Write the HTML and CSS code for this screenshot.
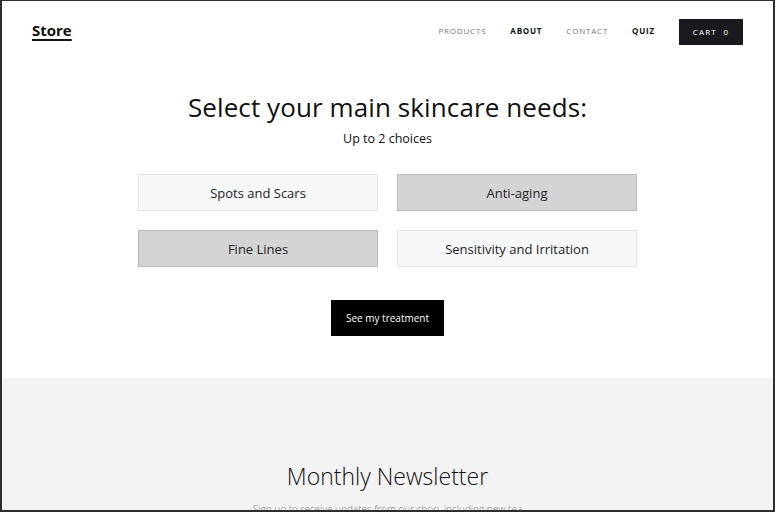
FILE: index.html
```html
<!DOCTYPE html>
<html>
    <head>
        <meta charset="utf-8" />
        <meta name="viewport" content="width=device-width" />
        <title>Store - Skincare quiz</title>
        <link rel="stylesheet" href="styles.css">
    </head>
    <body>
        <div class="page">
            <header class="site-header">
                <a class="logo" href="#">Store</a>
                <nav class="nav">
                    <a class="nav-link" href="#">Products</a>
                    <a class="nav-link active" href="#">About</a>
                    <a class="nav-link" href="#">Contact</a>
                    <a class="nav-link active" href="#">Quiz</a>
                    <a class="cart" href="#">Cart&nbsp; 0</a>
                </nav>
            </header>

            <section class="quiz">
                <h1 class="quiz-title">Select your main skincare needs:</h1>
                <p class="quiz-sub">Up to 2 choices</p>
                <div class="choices">
                    <button class="choice">Spots and Scars</button>
                    <button class="choice selected">Anti-aging</button>
                    <button class="choice selected">Fine Lines</button>
                    <button class="choice">Sensitivity and Irritation</button>
                </div>
                <button class="submit">See my treatment</button>
            </section>

            <section class="newsletter">
                <h2 class="newsletter-title">Monthly Newsletter</h2>
                <p class="newsletter-text">Sign up to receive updates from our shop, including new tea selections and upcoming events.</p>
            </section>
        </div>
    </body>
</html>
```

FILE: styles.css
```css
html, body { margin: 0; padding: 0; width: 100%; height: 100%; overflow: hidden }
body {
    background: #fff;
    font-family: 'Open Sans', sans-serif;
    color: #111;
}

.page {
    box-sizing: border-box;
    height: 100%;
    border: 2px solid #2e2e2e;
    border-top-width: 1px;
    overflow: hidden;
}

/* header */
.site-header {
    display: flex;
    align-items: center;
    justify-content: space-between;
    padding: 18px 30px 0 30px;
}
.logo {
    font-size: 15px;
    font-weight: 700;
    line-height: 18px;
    margin-top: -4px;
    color: #111;
    text-decoration: underline;
    text-decoration-thickness: 2px;
    text-underline-offset: 3px;
}
.nav {
    display: flex;
    align-items: center;
}
.nav-link {
    font-size: 8px;
    line-height: 10px;
    margin-top: -2px;
    letter-spacing: 0.8px;
    text-transform: uppercase;
    text-decoration: none;
    color: #777;
    margin-right: 24px;
}
.nav-link.active {
    color: #111;
    font-weight: 700;
}
.cart {
    display: block;
    width: 64px;
    height: 26px;
    line-height: 26px;
    text-align: center;
    background: #1a1a1e;
    color: #fff;
    font-size: 8px;
    letter-spacing: 1.2px;
    text-transform: uppercase;
    text-decoration: none;
}

/* quiz */
.quiz {
    display: flex;
    flex-direction: column;
    align-items: center;
    padding-top: 47px;
    height: 333px;
    box-sizing: border-box;
}
.quiz-title {
    margin: 0;
    font-size: 26px;
    font-weight: 400;
    letter-spacing: 0.1px;
    line-height: 30px;
}
.quiz-sub {
    margin: 9px 0 0 0;
    font-size: 12.5px;
    line-height: 16px;
}
.choices {
    display: grid;
    grid-template-columns: 240px 240px;
    gap: 19px;
    margin-top: 27px;
}
.choice {
    height: 37px;
    font-family: inherit;
    font-size: 13px;
    color: #222;
    background: #f7f8fa;
    border: 1px solid #e3e4e6;
    cursor: pointer;
}
.choice.selected {
    background: #d3d4d6;
    border-color: #b9babc;
}
.submit {
    margin-top: 33px;
    width: 113px;
    height: 36px;
    background: #000;
    color: #fff;
    border: 0;
    font-family: inherit;
    font-size: 10px;
    cursor: pointer;
}

/* newsletter */
.newsletter {
    background: #f3f3f3;
    height: 200px;
    text-align: center;
    padding-top: 84px;
    box-sizing: border-box;
}
.newsletter-title {
    margin: 0;
    font-size: 23px;
    font-weight: 300;
    line-height: 28px;
}
.newsletter-text {
    max-width: 290px;
    margin: 12px auto 0 auto;
    font-size: 10px;
    font-weight: 300;
    color: #888;
}
```
